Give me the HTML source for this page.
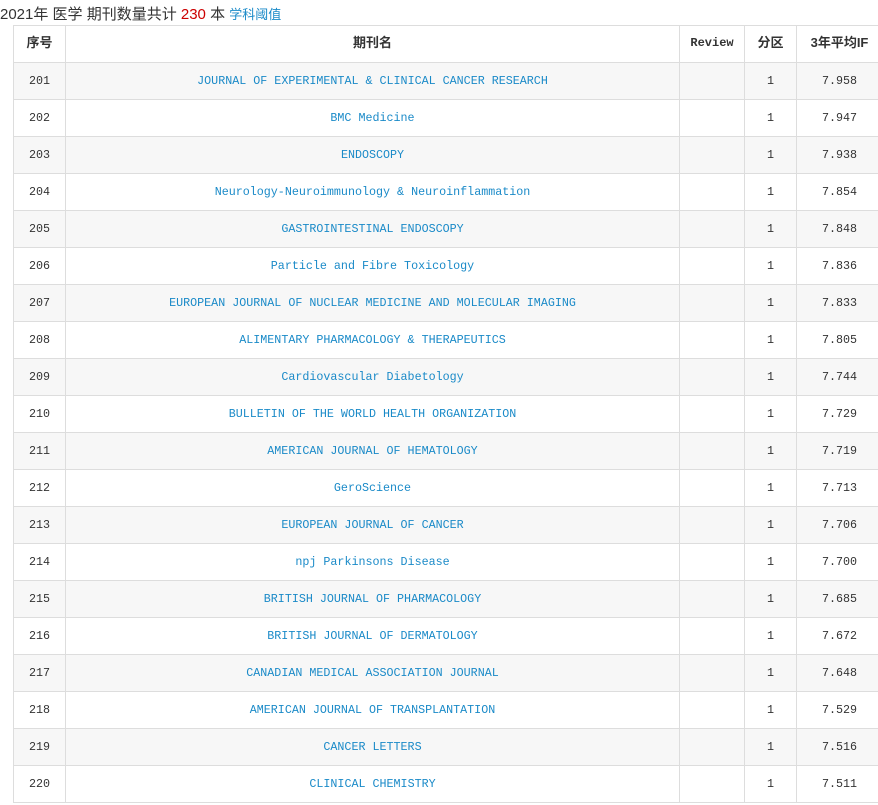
<!DOCTYPE html>
<html><head><meta charset="utf-8"><style>
body{margin:0;background:#fff;width:878px;height:805px;overflow:hidden;font-family:"Liberation Sans","Noto Sans CJK SC",sans-serif}
.t{position:absolute;left:0;top:3px;font-size:15px;color:#333;white-space:nowrap}
.t .r{color:#c00}.t .l{color:#1a8ac8;font-size:13px}
table{position:absolute;left:13px;top:25px;border-collapse:collapse;table-layout:fixed;width:869px}
td,th{border:1px solid #ddd;height:36px;padding:0;text-align:center;vertical-align:middle;line-height:16px;font-family:"Liberation Mono","Noto Sans CJK SC",monospace;font-size:11.7px;color:#333}
th{font-family:"Liberation Sans","Noto Sans CJK SC",sans-serif;font-size:13px;color:#333;font-weight:bold;padding-bottom:2px;height:34px}
th.rv{font-family:"Liberation Mono",monospace;font-size:12px}
tr:nth-child(even) td{background:#f7f7f7}
td.n{color:#1a8ac8}
</style></head><body>
<div class="t">2021年 医学 期刊数量共计 <span class="r">230</span> 本 <span class="l">学科阈值</span></div>
<table>
<colgroup><col style="width:52px"><col style="width:614px"><col style="width:65px"><col style="width:52px"><col style="width:86px"></colgroup>
<tr><th>序号</th><th>期刊名</th><th class="rv">Review</th><th>分区</th><th>3年平均IF</th></tr>
<tr><td>201</td><td class="n">JOURNAL OF EXPERIMENTAL &amp; CLINICAL CANCER RESEARCH</td><td></td><td>1</td><td>7.958</td></tr>
<tr><td>202</td><td class="n">BMC Medicine</td><td></td><td>1</td><td>7.947</td></tr>
<tr><td>203</td><td class="n">ENDOSCOPY</td><td></td><td>1</td><td>7.938</td></tr>
<tr><td>204</td><td class="n">Neurology-Neuroimmunology &amp; Neuroinflammation</td><td></td><td>1</td><td>7.854</td></tr>
<tr><td>205</td><td class="n">GASTROINTESTINAL ENDOSCOPY</td><td></td><td>1</td><td>7.848</td></tr>
<tr><td>206</td><td class="n">Particle and Fibre Toxicology</td><td></td><td>1</td><td>7.836</td></tr>
<tr><td>207</td><td class="n">EUROPEAN JOURNAL OF NUCLEAR MEDICINE AND MOLECULAR IMAGING</td><td></td><td>1</td><td>7.833</td></tr>
<tr><td>208</td><td class="n">ALIMENTARY PHARMACOLOGY &amp; THERAPEUTICS</td><td></td><td>1</td><td>7.805</td></tr>
<tr><td>209</td><td class="n">Cardiovascular Diabetology</td><td></td><td>1</td><td>7.744</td></tr>
<tr><td>210</td><td class="n">BULLETIN OF THE WORLD HEALTH ORGANIZATION</td><td></td><td>1</td><td>7.729</td></tr>
<tr><td>211</td><td class="n">AMERICAN JOURNAL OF HEMATOLOGY</td><td></td><td>1</td><td>7.719</td></tr>
<tr><td>212</td><td class="n">GeroScience</td><td></td><td>1</td><td>7.713</td></tr>
<tr><td>213</td><td class="n">EUROPEAN JOURNAL OF CANCER</td><td></td><td>1</td><td>7.706</td></tr>
<tr><td>214</td><td class="n">npj Parkinsons Disease</td><td></td><td>1</td><td>7.700</td></tr>
<tr><td>215</td><td class="n">BRITISH JOURNAL OF PHARMACOLOGY</td><td></td><td>1</td><td>7.685</td></tr>
<tr><td>216</td><td class="n">BRITISH JOURNAL OF DERMATOLOGY</td><td></td><td>1</td><td>7.672</td></tr>
<tr><td>217</td><td class="n">CANADIAN MEDICAL ASSOCIATION JOURNAL</td><td></td><td>1</td><td>7.648</td></tr>
<tr><td>218</td><td class="n">AMERICAN JOURNAL OF TRANSPLANTATION</td><td></td><td>1</td><td>7.529</td></tr>
<tr><td>219</td><td class="n">CANCER LETTERS</td><td></td><td>1</td><td>7.516</td></tr>
<tr><td>220</td><td class="n">CLINICAL CHEMISTRY</td><td></td><td>1</td><td>7.511</td></tr>
</table>
</body></html>
